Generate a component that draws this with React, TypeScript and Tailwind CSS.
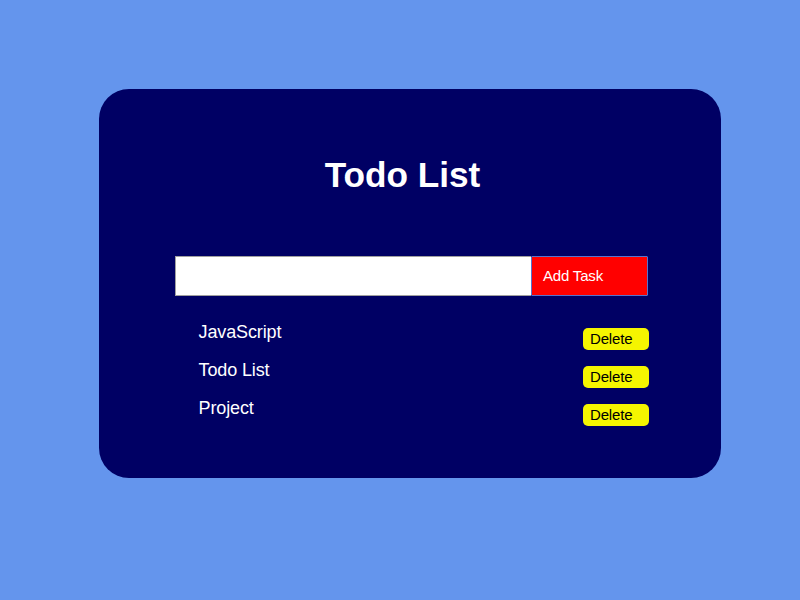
const tasks = ["JavaScript", "Todo List", "Project"];

export default function App() {
  return (
    <div className="flex h-[600px] w-[800px] items-start overflow-hidden bg-[#6495ed] pl-[99px] pt-[89px] font-['Liberation_Sans',Arial,sans-serif]">
      <main className="flex h-[389px] w-[622px] flex-col rounded-[30px] bg-[#000064] pl-[76px] pt-[65px] text-white">
        <h1 className="h-[42px] w-[455px] text-center text-[35.2px] font-bold leading-[42px]">Todo List</h1>
        <form className="mt-[60px] flex h-10 w-[473px]" onSubmit={(e) => e.preventDefault()}>
          <input aria-label="Task" className="h-10 w-[356px] border border-r-0 border-[#a0a0a0] bg-white px-2 text-black outline-none" />
          <button className="h-10 w-[117px] rounded-[1px] border border-[#5874cc] bg-[#ff0000] bg-clip-padding pl-[11px] text-left text-[15px] tracking-[-0.18px]">Add Task</button>
        </form>
        <ul className="mt-[23px] w-[474px] pl-[23px]">
          {tasks.map((task) => (
            <li key={task} className="flex h-[38px] items-start justify-between text-[18px] leading-[26px]">
              <span className="pl-[0.5px] tracking-[-0.12px]">{task}</span>
              <button className="mt-[9px] h-[22px] w-[66px] rounded-[5px] bg-[#f5f500] pl-[7px] text-left text-[15px] leading-[22px] tracking-[-0.15px] text-black">Delete</button>
            </li>
          ))}
        </ul>
      </main>
    </div>
  );
}
